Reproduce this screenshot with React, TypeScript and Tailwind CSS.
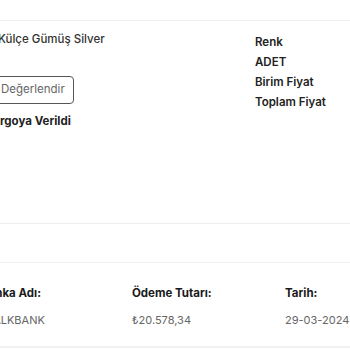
import React from "react";

export default function App() {
  return (
    <div
      className="w-[350px] h-[350px] bg-white overflow-hidden relative"
      style={{ fontFamily: "Inter, 'Noto Sans', sans-serif" }}
    >
      <div className="h-[21px] border-b border-[#f1f1f1]" />
      <div className="flex h-[203px] border-b border-[#eeeeee]">
        <div className="w-[255px] shrink-0 flex flex-col items-start pt-[10px]">
          <div className="ml-[-2px] text-[11.5px] leading-[16px] font-medium text-[#333] whitespace-nowrap">
            Külçe Gümüş Silver
          </div>
          <button className="mt-[29px] ml-[-11px] w-[85px] h-[28px] border border-[#555] rounded-[4px] pl-[11px] text-left text-[11.5px] text-[#666] bg-white whitespace-nowrap">
            Değerlendir
          </button>
          <div className="mt-[9px] ml-[-15px] text-[11.5px] leading-[16px] font-bold text-[#222] whitespace-nowrap">
            Kargoya Verildi
          </div>
        </div>
        <div className="flex flex-col pt-[11px] text-[11.5px] leading-[20px] font-semibold text-[#222] whitespace-nowrap">
          <div>Renk</div>
          <div>ADET</div>
          <div>Birim Fiyat</div>
          <div>Toplam Fiyat</div>
        </div>
      </div>
      <div className="h-[39px] border-b border-[#f3f3f3]" />
      <div className="h-[85px] border-b-2 border-[#f2f2f2] flex pt-[22px] whitespace-nowrap">
        <div className="w-[151px] shrink-0 ml-[-19px] flex flex-col gap-[11px]">
          <div className="text-[11.5px] leading-[16px] font-bold text-[#1a1a1a]">Banka Adı:</div>
          <div className="text-[11px] leading-[16px] text-[#666] ml-[4px]">HALKBANK</div>
        </div>
        <div className="w-[153px] shrink-0 flex flex-col gap-[11px]">
          <div className="text-[11.5px] leading-[16px] font-bold text-[#1a1a1a]">Ödeme Tutarı:</div>
          <div className="text-[11px] leading-[16px] text-[#666]">₺20.578,34</div>
        </div>
        <div className="shrink-0 flex flex-col gap-[11px]">
          <div className="text-[11.5px] leading-[16px] font-bold text-[#1a1a1a]">Tarih:</div>
          <div className="text-[11px] leading-[16px] text-[#666]">29-03-2024 14:32</div>
        </div>
      </div>
    </div>
  );
}
